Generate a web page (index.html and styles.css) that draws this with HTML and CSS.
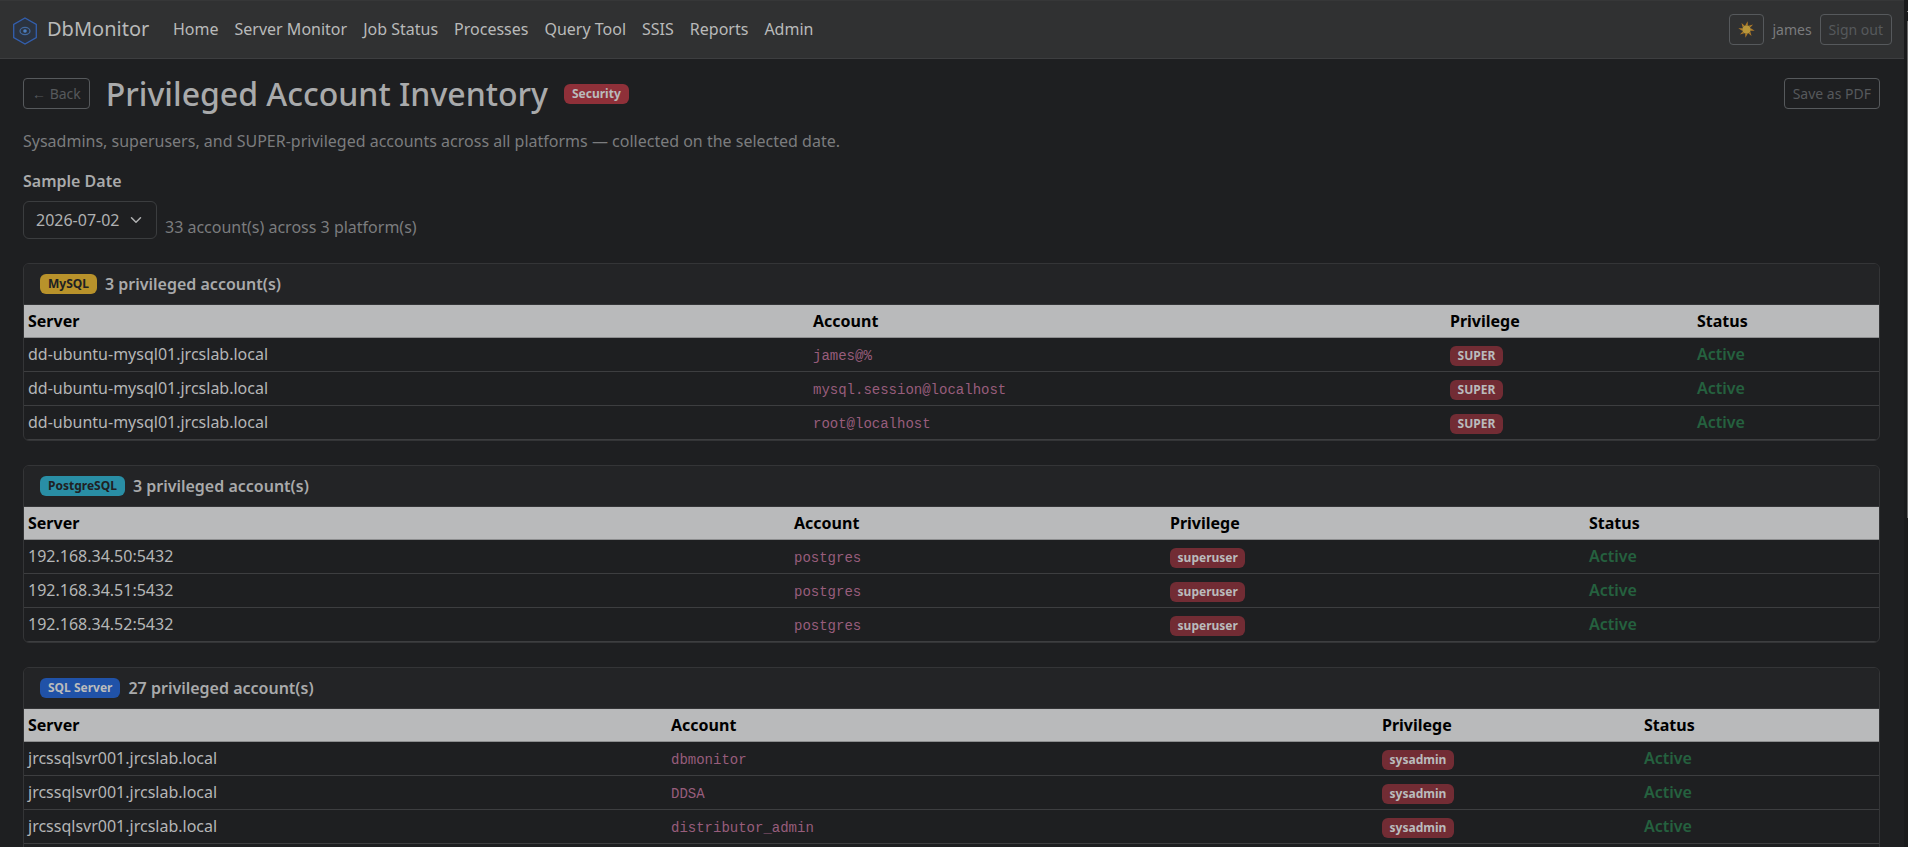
FILE: index.html
```html
<!DOCTYPE html>
<html lang="en">
<head>
  <meta charset="UTF-8">
  <title>Privileged Account Inventory - DbMonitor</title>
  <link rel="stylesheet" href="styles.css">
</head>
<body>
<div class="page">
  <nav class="navbar">
    <a class="brand" href="#">
      <svg class="logo" width="26" height="28" viewBox="0 0 26 28">
        <path d="M13 1 L24.3 7.4 V20.6 L13 27 L1.7 20.6 V7.4 Z" fill="#2b3340" stroke="#335fae" stroke-width="1.3"/>
        <ellipse cx="13" cy="14" rx="5" ry="3.6" fill="none" stroke="#42699f" stroke-width="1.2"/>
        <circle cx="13" cy="14" r="1.8" fill="#4c7fc0"/>
      </svg>
      <span>DbMonitor</span>
    </a>
    <ul class="nav-links">
      <li><a href="#">Home</a></li>
      <li><a href="#">Server Monitor</a></li>
      <li><a href="#">Job Status</a></li>
      <li><a href="#">Processes</a></li>
      <li><a href="#">Query Tool</a></li>
      <li><a href="#">SSIS</a></li>
      <li><a href="#">Reports</a></li>
      <li><a href="#">Admin</a></li>
    </ul>
    <div class="nav-user">
      <button class="btn btn-theme" aria-label="Theme">
        <svg width="17" height="17" viewBox="0 0 18 18">
          <g fill="#b07a26">
            <path id="ray" d="M7.8 4.4 L10.2 0.3 L10.4 4.4 Z"/>
            <use href="#ray" transform="rotate(45 9 9)"/>
            <use href="#ray" transform="rotate(90 9 9)"/>
            <use href="#ray" transform="rotate(135 9 9)"/>
            <use href="#ray" transform="rotate(180 9 9)"/>
            <use href="#ray" transform="rotate(225 9 9)"/>
            <use href="#ray" transform="rotate(270 9 9)"/>
            <use href="#ray" transform="rotate(315 9 9)"/>
          </g>
          <circle cx="9" cy="9" r="4.6" fill="#b9963a"/>
        </svg>
      </button>
      <span class="user-name">james</span>
      <button class="btn btn-signout">Sign out</button>
    </div>
  </nav>

  <main>
    <div class="title-row">
      <button class="btn">← Back</button>
      <h2>Privileged Account Inventory</h2>
      <span class="badge badge-security">Security</span>
      <button class="btn btn-pdf">Save as PDF</button>
    </div>
    <p class="intro">Sysadmins, superusers, and SUPER-privileged accounts across all platforms — collected on the selected date.</p>

    <div class="filter">
      <div>
        <div class="label">Sample Date</div>
        <div class="select">
          <span>2026-07-02</span>
          <svg width="12" height="12" viewBox="0 0 16 16"><path fill="none" stroke="#b0b1b2" stroke-linecap="round" stroke-linejoin="round" stroke-width="2" d="m2 5 6 6 6-6"/></svg>
        </div>
      </div>
      <span class="total">33 account(s) across 3 platform(s)</span>
    </div>

    <section class="card mysql">
      <div class="card-header"><span class="badge">MySQL</span><span>3 privileged account(s)</span></div>
      <table>
        <colgroup><col class="c1"><col class="c2"><col class="c3"><col></colgroup>
        <thead><tr><th>Server</th><th>Account</th><th>Privilege</th><th>Status</th></tr></thead>
        <tbody>
          <tr><td>dd-ubuntu-mysql01.jrcslab.local</td><td><code>james@%</code></td><td><span class="badge badge-priv">SUPER</span></td><td class="active">Active</td></tr>
          <tr><td>dd-ubuntu-mysql01.jrcslab.local</td><td><code>mysql.session@localhost</code></td><td><span class="badge badge-priv">SUPER</span></td><td class="active">Active</td></tr>
          <tr><td>dd-ubuntu-mysql01.jrcslab.local</td><td><code>root@localhost</code></td><td><span class="badge badge-priv">SUPER</span></td><td class="active">Active</td></tr>
        </tbody>
      </table>
    </section>

    <section class="card postgres">
      <div class="card-header"><span class="badge">PostgreSQL</span><span>3 privileged account(s)</span></div>
      <table>
        <colgroup><col class="c1"><col class="c2"><col class="c3"><col></colgroup>
        <thead><tr><th>Server</th><th>Account</th><th>Privilege</th><th>Status</th></tr></thead>
        <tbody>
          <tr><td>192.168.34.50:5432</td><td><code>postgres</code></td><td><span class="badge badge-priv">superuser</span></td><td class="active">Active</td></tr>
          <tr><td>192.168.34.51:5432</td><td><code>postgres</code></td><td><span class="badge badge-priv">superuser</span></td><td class="active">Active</td></tr>
          <tr><td>192.168.34.52:5432</td><td><code>postgres</code></td><td><span class="badge badge-priv">superuser</span></td><td class="active">Active</td></tr>
        </tbody>
      </table>
    </section>

    <section class="card sqlserver">
      <div class="card-header"><span class="badge">SQL Server</span><span>27 privileged account(s)</span></div>
      <table>
        <colgroup><col class="c1"><col class="c2"><col class="c3"><col></colgroup>
        <thead><tr><th>Server</th><th>Account</th><th>Privilege</th><th>Status</th></tr></thead>
        <tbody>
          <tr><td>jrcssqlsvr001.jrcslab.local</td><td><code>dbmonitor</code></td><td><span class="badge badge-priv">sysadmin</span></td><td class="active">Active</td></tr>
          <tr><td>jrcssqlsvr001.jrcslab.local</td><td><code>DDSA</code></td><td><span class="badge badge-priv">sysadmin</span></td><td class="active">Active</td></tr>
          <tr><td>jrcssqlsvr001.jrcslab.local</td><td><code>distributor_admin</code></td><td><span class="badge badge-priv">sysadmin</span></td><td class="active">Active</td></tr>
        </tbody>
      </table>
    </section>
  </main>
</div>
<div class="scrollbar"><div class="arrow"></div><div class="thumb"></div></div>
</body>
</html>
```
FILE: styles.css
```css
*{box-sizing: border-box;}
body{
  display: flex;
  height: 100vh;
  margin: 0;
  overflow: hidden;
  font: 16px/24px "Noto Sans", sans-serif;
  color: #b0b1b2;
  background: #1e1f21;
}
a{color: inherit; text-decoration: none;}
.page{
  flex: 1;
  overflow: hidden;
}

/* top bar */
.navbar{
  display: flex;
  align-items: center;
  height: 59px;
  padding: 0 12px 2px;
  color: #b9baba;
  background: #303132;
  border-top: 1px solid #363738;
  border-bottom: 1px solid #3d3e40;
}
.brand{
  display: flex;
  align-items: center;
  gap: 9px;
  width: 153px;
  font-size: 20px;
}
.logo{
  margin-top: 4px;
}
.nav-links{
  display: flex;
  gap: 16px;
  margin: 0 0 0 8px;
  padding: 0;
  list-style: none;
}
.nav-user{
  display: flex;
  align-items: center;
  gap: 8px;
  margin: 2px 0 0 auto;
}
.user-name{
  color: #7b7c7e;
  font-size: 14px;
}
.btn{
  height: 31px;
  padding: 0 8px;
  font: 14px/21px "Noto Sans", sans-serif;
  color: #56595c;
  background: none;
  border: 1px solid #56595c;
  border-radius: 4px;
}
.btn-theme{
  display: flex;
  align-items: center;
  width: 35px;
}

/* page heading */
main{
  padding: 16px 24px 0 23px;
}
.title-row{
  display: flex;
  align-items: center;
  height: 38px;
}
.title-row .btn{margin-bottom: 1px;}
h2{
  margin: 0 16px;
  font-size: 32px;
  font-weight: 500;
  line-height: 38px;
  color: #a9aaab;
}
.title-row .btn-pdf{margin-left: auto;}
.badge{
  display: inline-block;
  padding: 4px 8px;
  font-size: 12px;
  font-weight: 700;
  line-height: 12px;
  color: #babbbc;
  border-radius: 6px;
}
.badge-security{background: #8f3039;}
.badge-priv{
  padding: 4px 7.6px;
  background: #722c34;
}
.intro{
  margin: 16px 0;
  color: #7b7c7e;
}
.filter{
  display: flex;
  align-items: flex-end;
  gap: 8px;
}
.label{
  margin-bottom: 8px;
  font-weight: 600;
  color: #a9aaab;
}
.select{
  display: flex;
  align-items: center;
  justify-content: space-between;
  width: 134px;
  height: 38px;
  padding: 0 14px 0 12px;
  border: 1px solid #3b3d3f;
  border-radius: 6px;
}
.total{color: #7b7c7e;}

/* platform cards */
.card{
  margin-top: 24px;
  border: 1px solid #343537;
  border-radius: 6px;
  overflow: hidden;
}
.card-header{
  display: flex;
  align-items: center;
  gap: 8px;
  height: 41px;
  padding: 0 16px;
  font-weight: 600;
  color: #a9aaab;
  background: #232426;
  border-bottom: 1px solid #343537;
}
.mysql .card-header .badge{color: #202123; background: #b8922b;}
.postgres .card-header .badge{color: #202123; background: #298ea5;}
.sqlserver .card-header .badge{background: #2052a8;}
.sqlserver{padding-bottom: 34px;}
table{
  width: 100%;
  table-layout: fixed;
  border-collapse: separate;
  border-spacing: 0;
}
th, td{
  height: 34px;
  padding: 4px;
  text-align: left;
  border-bottom: 1px solid #3d3e40;
}
th{
  height: 33px;
  font-weight: 700;
  color: #000;
  background: #b9babb;
  border-bottom-color: #8d8e8f;
}
td{
  padding: 4px 4px 5px;
  vertical-align: top;
  color: #b5b6b7;
}
code{
  font: 14px "Liberation Mono", monospace;
  color: #985d7c;
}
.active{
  font-weight: 600;
  color: #25613f;
}
.mysql .c1{width: 785px;}
.mysql .c2{width: 637px;}
.mysql .c3{width: 247px;}
.postgres .c1{width: 766px;}
.postgres .c2{width: 376px;}
.postgres .c3{width: 419px;}
.sqlserver .c1{width: 643px;}
.sqlserver .c2{width: 711px;}
.sqlserver .c3{width: 262px;}

/* window scrollbar */
.scrollbar{
  width: 4px;
  padding: 11px 0 0 3px;
  background: #1a1b1c;
}
.arrow{
  height: 1px;
  margin-bottom: 9px;
  background: #8a8a8a;
}
.thumb{
  height: 497px;
  background: #6b6b6b;
}
```
